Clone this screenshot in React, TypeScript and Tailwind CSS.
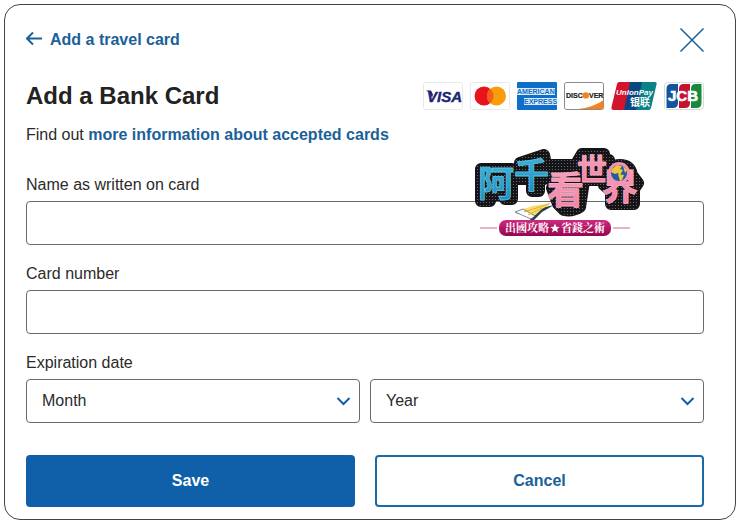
import { useState } from 'react';

interface SelectFieldProps {
  id: string;
  label: string;
  options: string[];
}

const months = ['01', '02', '03', '04', '05', '06', '07', '08', '09', '10', '11', '12'];
const years = ['2025', '2026', '2027', '2028', '2029', '2030', '2031', '2032'];

const inputClass =
  'block h-11 w-full rounded border border-[#6b6b6b] bg-white px-[15px] text-base text-[#2b2b2b] focus:outline-none focus:ring-2 focus:ring-[#1060a9]';

const logoFont = '"Liberation Sans", Arial, sans-serif';
const cjkFont = '"Noto Sans CJK TC", sans-serif';

function SelectField({ id, label, options }: SelectFieldProps) {
  return (
    <div className="relative">
      <select id={id} aria-label={label} defaultValue="" className={`${inputClass} appearance-none`}>
        <option value="">{label}</option>
        {options.map((option) => (
          <option key={option} value={option}>
            {option}
          </option>
        ))}
      </select>
      <svg className="pointer-events-none absolute right-2 top-4 h-3 w-4" viewBox="0 0 16 12" fill="none" stroke="#1060a9" strokeWidth={2}>
        <path d="M1.500 3l6 6 6-6" />
      </svg>
    </div>
  );
}

function AcceptedCards() {
  return (
    <div className="flex items-center gap-[7px]">
      <svg className="h-7 w-10" viewBox="0 0 40 28" role="img" aria-label="Visa">
        <rect x="0.5" y="0.5" width="39" height="27" rx="2" fill="#fff" stroke="#e9e9e9" />
        <path d="M3 8.500h5l2 4-1 3q-2-5-6-7z" fill="#1a2674" />
        <text x="4" y="20" fontFamily={logoFont} fontSize="15" fontWeight="bold" fontStyle="italic" fill="#1a2674" stroke="#1a2674" strokeWidth="0.4">VISA</text>
      </svg>
      <svg className="h-7 w-10" viewBox="0 0 40 28" role="img" aria-label="Mastercard">
        <rect x="0.5" y="0.5" width="39" height="27" rx="2" fill="#fff" stroke="#e9e9e9" />
        <circle cx="14" cy="14" r="9.500" fill="#e8141c" />
        <circle cx="26.500" cy="14" r="9.500" fill="#f99d0c" />
        <path d="M20.250 6.850a9.500 9.500 0 0 1 0 14.300a9.500 9.500 0 0 1 0-14.300z" fill="#f4601c" />
      </svg>
      <svg className="h-7 w-10" viewBox="0 0 40 28" role="img" aria-label="American Express">
        <rect width="40" height="28" rx="1" fill="#0f6fc8" />
        <rect x="0" y="6" width="38" height="7" fill="#dcebf8" />
        <rect x="7" y="16" width="33" height="7" fill="#dcebf8" />
        <g fontFamily={logoFont} fontSize="7" fontWeight="bold" fill="#0f6fc8">
          <text x="0" y="12">AMERICAN</text>
          <text x="7" y="22">EXPRESS</text>
        </g>
      </svg>
      <svg className="h-7 w-10" viewBox="0 0 40 28" role="img" aria-label="Discover">
        <rect x="0.5" y="0.5" width="39" height="27" rx="2" fill="#fff" stroke="#8b8b8b" />
        <path d="M14 27c11-1 20-5 25.500-9v7.500a2 2 0 0 1-2 1.500z" fill="#f58220" />
        <g fontFamily={logoFont} fontSize="7" fontWeight="bold" fill="#222" stroke="#222" strokeWidth="0.2">
          <text x="2" y="16">DISC</text>
          <text x="25" y="16">VER</text>
        </g>
        <circle cx="21.800" cy="13.400" r="3.200" fill="#f58220" />
      </svg>
      <svg className="h-7 w-[46px]" viewBox="0 0 46 28" role="img" aria-label="UnionPay">
        <path d="M8 0h12l-6 28H3c-2 0-3-1-2.500-3L6 2Q6.500 0 8 0z" fill="#d2142c" />
        <path d="M19 0h13l-6 28H13z" fill="#0b4683" />
        <path d="M31 0h13c1.500 0 2 1 1.500 2.500L40 26q-.5 2-2.500 2H25z" fill="#0a8287" />
        <text x="5" y="13" fontFamily={logoFont} fontSize="8" fontWeight="bold" fontStyle="italic" fill="#fff">UnionPay</text>
        <text x="19" y="24" fontFamily={cjkFont} fontSize="10" fontWeight="bold" fill="#fff">银联</text>
      </svg>
      <svg className="h-7 w-10" viewBox="0 0 40 28" role="img" aria-label="JCB">
        <rect x="0.500" y="0.500" width="39" height="27" rx="3" fill="#fff" stroke="#dadada" />
        <path d="M7 2h7v19q0 5-5 5H2.500V7Q2.500 2 7 2z" fill="#14549f" />
        <path d="M19.500 2h6.500v19q0 5-5 5h-6V7q0-5 4.500-5z" fill="#c4122f" />
        <path d="M31.500 2h6v19q0 5-5 5H27V7q0-5 4.500-5z" fill="#168a3c" />
        <text x="4" y="19" fontFamily={logoFont} fontSize="15" fontWeight="bold" fill="#fff" stroke="#fff" strokeWidth="0.6">JCB</text>
      </svg>
    </div>
  );
}

const glyphs = [
  { char: '阿', x: 14, y: 56, size: 36, color: 'url(#blue)', edge: '#5cc3de' },
  { char: '千', x: 50, y: 47, size: 35, color: 'url(#blue)', edge: '#5cc3de' },
  { char: '看', x: 83, y: 63, size: 37, color: 'url(#pink)', edge: '#f8a9c2' },
  { char: '世', x: 113, y: 39, size: 30, color: 'url(#pink)', edge: '#f8a9c2' },
  { char: '界', x: 138, y: 59, size: 36, color: 'url(#pink)', edge: '#f8a9c2' },
];

// Dark plate behind the site name, one outline per character
const plate =
  'M17 28h31v30H41V54H26v6H17z' +
  'M56 22l24-8 3 14 2 8-10 4v10H68V38H53V28h10z' +
  'M88 24h30l2 16-4 26q-8 5-16 3l-6-6-6-16 5-7z' +
  'M118 13h22v6h5v20h-29l-4-16z' +
  'M144 34q2-10 12-10 10 0 12 10l6 8-4 6v15h-23V50l-7-6z';

function SiteBadge() {
  return (
    <svg className="h-25 w-48" viewBox="0 0 192 100" role="img" aria-label="阿千看世界">
      <defs>
        <pattern id="dots" width="3" height="3" patternUnits="userSpaceOnUse">
          <rect width="3" height="3" fill="#161316" />
          <circle cx="1.500" cy="1.500" r="0.600" fill="#66777a" />
        </pattern>
        <linearGradient id="blue" x1="0" y1="0" x2="0" y2="1">
          <stop offset="0" stopColor="#45bce0" />
          <stop offset="1" stopColor="#1c86bb" />
        </linearGradient>
        <linearGradient id="pink" x1="0" y1="0" x2="0" y2="1">
          <stop offset="0" stopColor="#f7a8bf" />
          <stop offset="1" stopColor="#ee7fa6" />
        </linearGradient>
        <linearGradient id="pill" x1="0" y1="0" x2="0" y2="1">
          <stop offset="0" stopColor="#cf2a80" />
          <stop offset="1" stopColor="#95064f" />
        </linearGradient>
      </defs>
      <path d={plate} fill="#161316" stroke="#161316" strokeWidth="12" strokeLinejoin="round" />
      <path d={plate} fill="url(#dots)" stroke="url(#dots)" strokeWidth="10" strokeLinejoin="round" />
      <g fontFamily={cjkFont} fontWeight="bold" strokeLinejoin="round">
        {glyphs.map((g) => (
          <text key={g.char} x={g.x} y={g.y} fontSize={g.size} fill={g.color} stroke={g.edge} strokeWidth="0.8">
            {g.char}
          </text>
        ))}
      </g>
      {/* Globe */}
      <circle cx="155" cy="32" r="9.500" fill="#1c5fa8" stroke="#f593b5" strokeWidth="3" />
      <path d="M148 28l5-4 5 1-2 3 3 1-3 5-2-2-3 1-4-2zM154 33l6 1-2 5-2 1zM159 25l4 4-2 3z" fill="#f3c63a" />
      {/* Flying card */}
      <path d="M52 73l38-9-12 7-9 9-3-1 2-6z" fill="#2b3e4c" />
      <path d="M51 71l17-6 20-3-10 6-11 10-4-4z" fill="#f7df73" />
      <path d="M51 71l8-3 12 7-4 3z" fill="#fff" stroke="#2b3e4c" strokeWidth="0.600" />
      <path d="M60 71l25-8M64 74l14-7" stroke="#e7ac22" strokeWidth="1" />
      {/* Tagline */}
      <path d="M16 87h17M149 87h17" stroke="#d06695" strokeWidth="1" />
      <rect x="35" y="79" width="112" height="16" rx="7" fill="url(#pill)" />
      <g fontFamily='"Noto Serif CJK TC", "Noto Sans CJK TC", sans-serif' fontSize="11" fontWeight="bold" fill="#fff">
        <text x="41" y="91">出國攻略</text>
        <text x="97" y="91">省錢之術</text>
      </g>
      <path d="M91 82.500l1.300 3.200 3.400.2-2.600 2.200.9 3.400-3-1.900-3 1.900.9-3.400-2.600-2.200 3.400-.2z" fill="#fff" />
    </svg>
  );
}

export default function App() {
  const [name, setName] = useState('');
  const [cardNumber, setCardNumber] = useState('');

  return (
    <div className="bg-white px-1 py-1 font-['Liberation_Sans',Arial,sans-serif] text-base text-[#2b2b2b]">
      <main className="rounded-2xl border border-[#444] bg-white pb-3 pl-[21px] pr-[31px] pt-[23px]">
        {/* Header */}
        <div className="flex items-center justify-between">
          <a href="#travel-card" className="flex items-center gap-2 font-bold text-[#1a6199]">
            <svg className="h-4 w-4" viewBox="0 0 16 16" fill="none" stroke="currentColor" strokeWidth={2}>
              <path d="M7 0.500L1 6.500l6 6M1 6.500h15" />
            </svg>
            Add a travel card
          </a>
          <button type="button" aria-label="Close" className="h-6 w-6 text-[#1a6199]">
            <svg className="h-6 w-6" viewBox="0 0 24 24" fill="none" stroke="currentColor" strokeWidth={1.5}>
              <path d="M0.500 0.500l23 23M23.500 0.500l-23 23" />
            </svg>
          </button>
        </div>

        {/* Title */}
        <div className="mt-7 flex items-center justify-between">
          <h1 className="text-2xl font-bold text-[#222]">Add a Bank Card</h1>
          <AcceptedCards />
        </div>
        <p className="mt-[11px]">
          Find out{' '}
          <a href="#accepted-cards" className="font-bold text-[#1a6199]">
            more information about accepted cards
          </a>
        </p>

        <form className="mt-[26px]" onSubmit={(e) => e.preventDefault()}>
          <div className="relative">
            <label htmlFor="name" className="mb-1 block">Name as written on card</label>
            <input id="name" type="text" value={name} onChange={(e) => setName(e.target.value)} className={inputClass} />
            <div className="pointer-events-none absolute -top-8 right-12">
              <SiteBadge />
            </div>
          </div>

          <div className="mt-[17px]">
            <label htmlFor="number" className="mb-1 block">Card number</label>
            <input id="number" type="text" inputMode="numeric" value={cardNumber} onChange={(e) => setCardNumber(e.target.value)} className={inputClass} />
          </div>

          <fieldset className="mt-[17px]">
            <legend className="mb-1 block">Expiration date</legend>
            <div className="grid grid-cols-2 gap-2.5">
              <SelectField id="month" label="Month" options={months} />
              <SelectField id="year" label="Year" options={years} />
            </div>
          </fieldset>

          <div className="mt-8 grid grid-cols-2 gap-5">
            <button type="submit" className="h-13 rounded bg-[#1060a9] font-bold text-white">Save</button>
            <button type="button" className="h-13 rounded border-2 border-[#1a6aa8] bg-white font-bold text-[#1a6199]">Cancel</button>
          </div>
        </form>
      </main>
    </div>
  );
}
